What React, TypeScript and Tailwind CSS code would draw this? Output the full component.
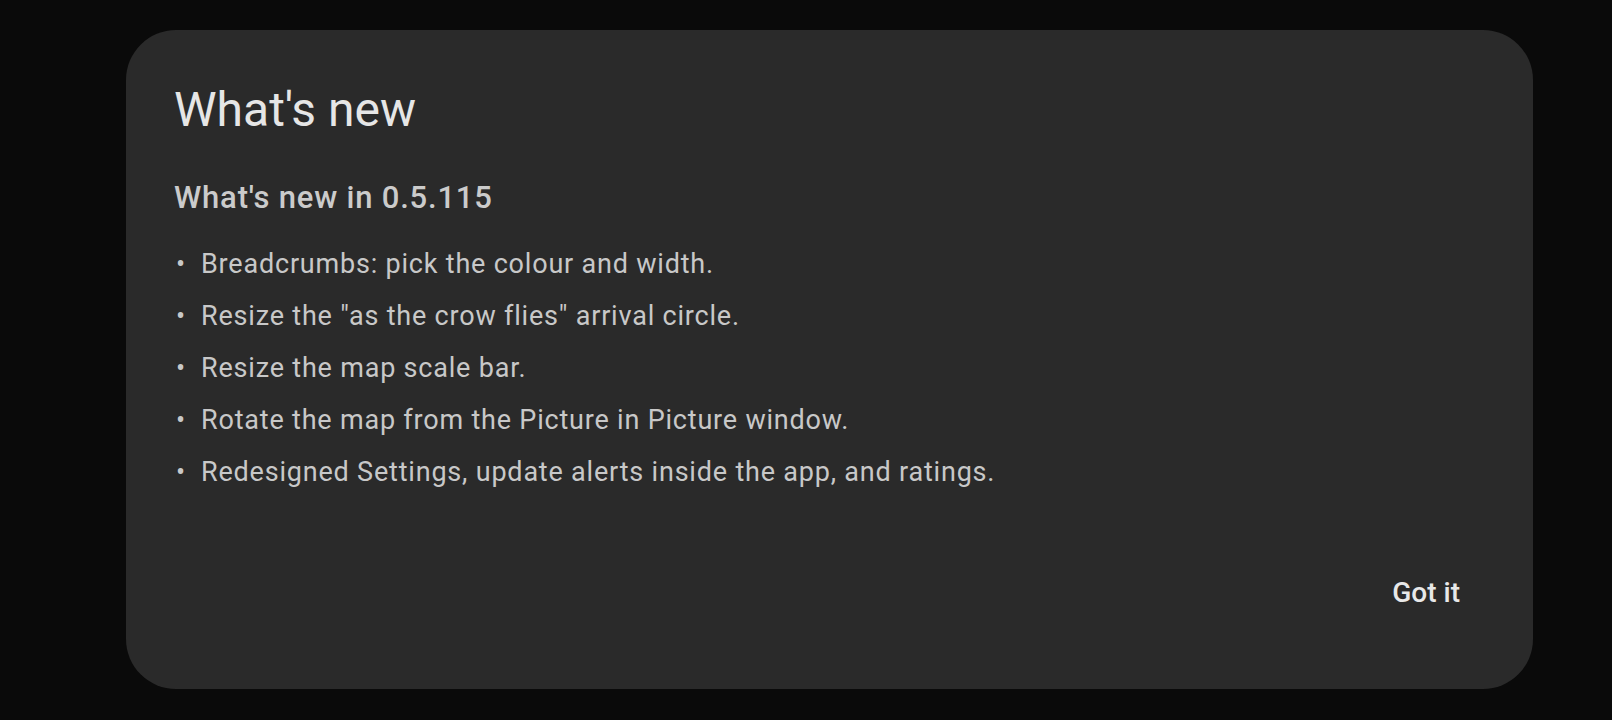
const notes = [
  "Breadcrumbs: pick the colour and width.",
  'Resize the "as the crow flies" arrival circle.',
  "Resize the map scale bar.",
  "Rotate the map from the Picture in Picture window.",
  "Redesigned Settings, update alerts inside the app, and ratings."
];

export default function App() {
  return (
    <main
      className="flex h-[720px] w-full bg-[#0a0a0a] pb-[31px] pl-[126px] pr-[79px] pt-[30px]"
      style={{ fontFamily: "Roboto, 'Noto Sans', sans-serif" }}
    >
      <section className="flex flex-1 flex-col rounded-[50px] bg-[#2a2a2a] pb-[68px] pl-[48px] pr-[50px] pt-[52px]">
        <h1 className="text-[48px] font-normal leading-[56px] text-[#e6e6e6]">What's new</h1>

        <h2 className="mt-[42px] text-[31px] font-medium leading-[36px] tracking-[0.8px] text-[#cbcbcb]">
          What's new in 0.5.115
        </h2>

        <ul className="mt-[22px]">
          {notes.map((note) => (
            <li className="flex text-[27px] leading-[52px] tracking-[0.8px] text-[#c8c8c8]" key={note}>
              <span className="w-[27px] shrink-0 pl-[2px]">•</span>
              <span>{note}</span>
            </li>
          ))}
        </ul>

        <div className="flex-1" />

        <div className="flex justify-end">
          <button className="rounded-full px-[23px] py-[12px] text-[28px] font-medium leading-[32px] text-[#e8e8e8]">
            Got it
          </button>
        </div>
      </section>
    </main>
  );
}
